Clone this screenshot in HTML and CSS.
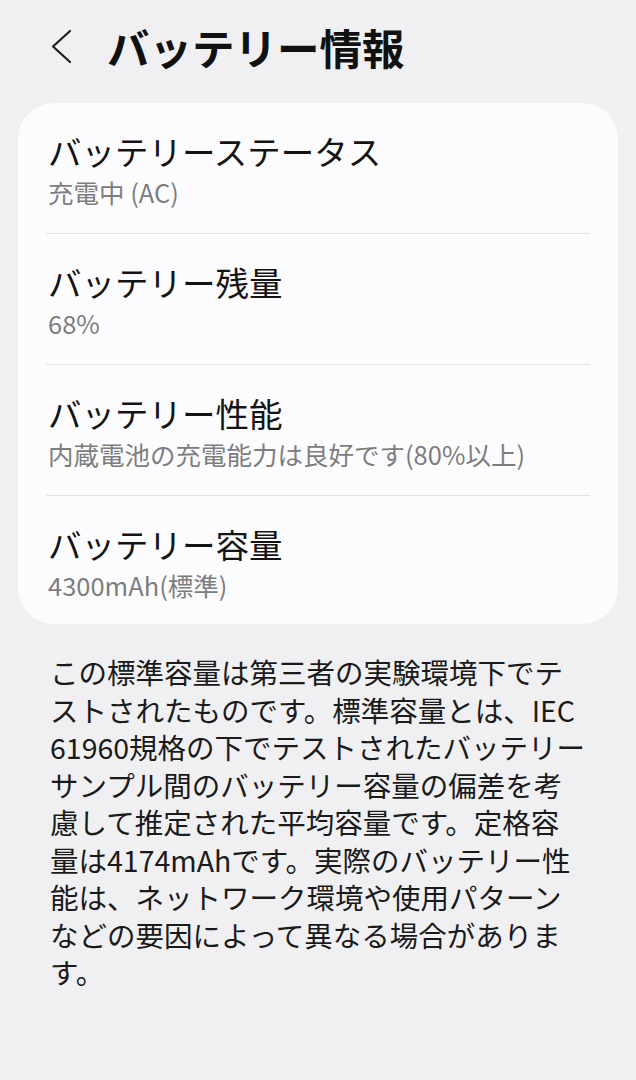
FILE: index.html
```html
<html>
  <head>
    <meta charset="utf-8">
    <meta name="viewport" content="width=device-width,initial-scale=1">
    <link rel="stylesheet" href="styles.css">
  </head>

  <body>
    <div class="topbar">
      <svg class="back" width="24" height="36" viewBox="0 0 24 36">
        <polyline points="20,2 3,17.5 20,33" fill="none" stroke="#1c1c1c" stroke-width="2.2" stroke-linecap="round" stroke-linejoin="round"/>
      </svg>
      <h1 class="title">バッテリー情報</h1>
    </div>

    <div class="card">
      <div class="row">
        <div class="row_title">バッテリーステータス</div>
        <div class="row_sub">充電中 (AC)</div>
      </div>
      <div class="row">
        <div class="row_title">バッテリー残量</div>
        <div class="row_sub">68%</div>
      </div>
      <div class="row">
        <div class="row_title">バッテリー性能</div>
        <div class="row_sub">内蔵電池の充電能力は良好です(80%以上)</div>
      </div>
      <div class="row">
        <div class="row_title">バッテリー容量</div>
        <div class="row_sub">4300mAh(標準)</div>
      </div>
    </div>

    <!-- line breaks as on the device -->
    <p class="note">
      この標準容量は第三者の実験環境下でテ<br>
      ストされたものです。標準容量とは、IEC<br>
      61960規格の下でテストされたバッテリー<br>
      サンプル間のバッテリー容量の偏差を考<br>
      慮して推定された平均容量です。定格容<br>
      量は4174mAhです。実際のバッテリー性<br>
      能は、ネットワーク環境や使用パターン<br>
      などの要因によって異なる場合がありま<br>
      す。
    </p>
  </body>
</html>
```

FILE: styles.css
```css
body {
    margin: 0;
    background: #f0f0f2;
    font-family: "Noto Sans CJK JP", "Noto Sans", sans-serif;
    color: #141414;
}

.topbar {
    display: flex;
    align-items: center;
    height: 94px;
    padding-left: 50px;
}
.back {
    display: block;
}
.title {
    margin: 0 0 0 33px;
    font-size: 42.5px;
    font-weight: 700;
    line-height: 1;
    color: #111;
}

.card {
    margin: 9px 18px 0;
    padding: 0 28px;
    background: #fcfcfe;
    border-radius: 36px;
}
.row {
    padding: 28px 0 20px 2px;
    border-bottom: 1px solid #e3e3e6;
}
.row:last-child {
    border-bottom: none;
    padding-bottom: 18px;
}
.row_title {
    font-size: 33.5px;
    line-height: 40px;
    color: #141414;
}
.row_sub {
    font-size: 25.5px;
    line-height: 42px;
    color: #7d7d7f;
}

.note {
    margin: 29px 0 0;
    padding: 0 20px 0 50px;
    font-size: 28.5px;
    line-height: 37.5px;
    color: #1a1a1a;
}
```
